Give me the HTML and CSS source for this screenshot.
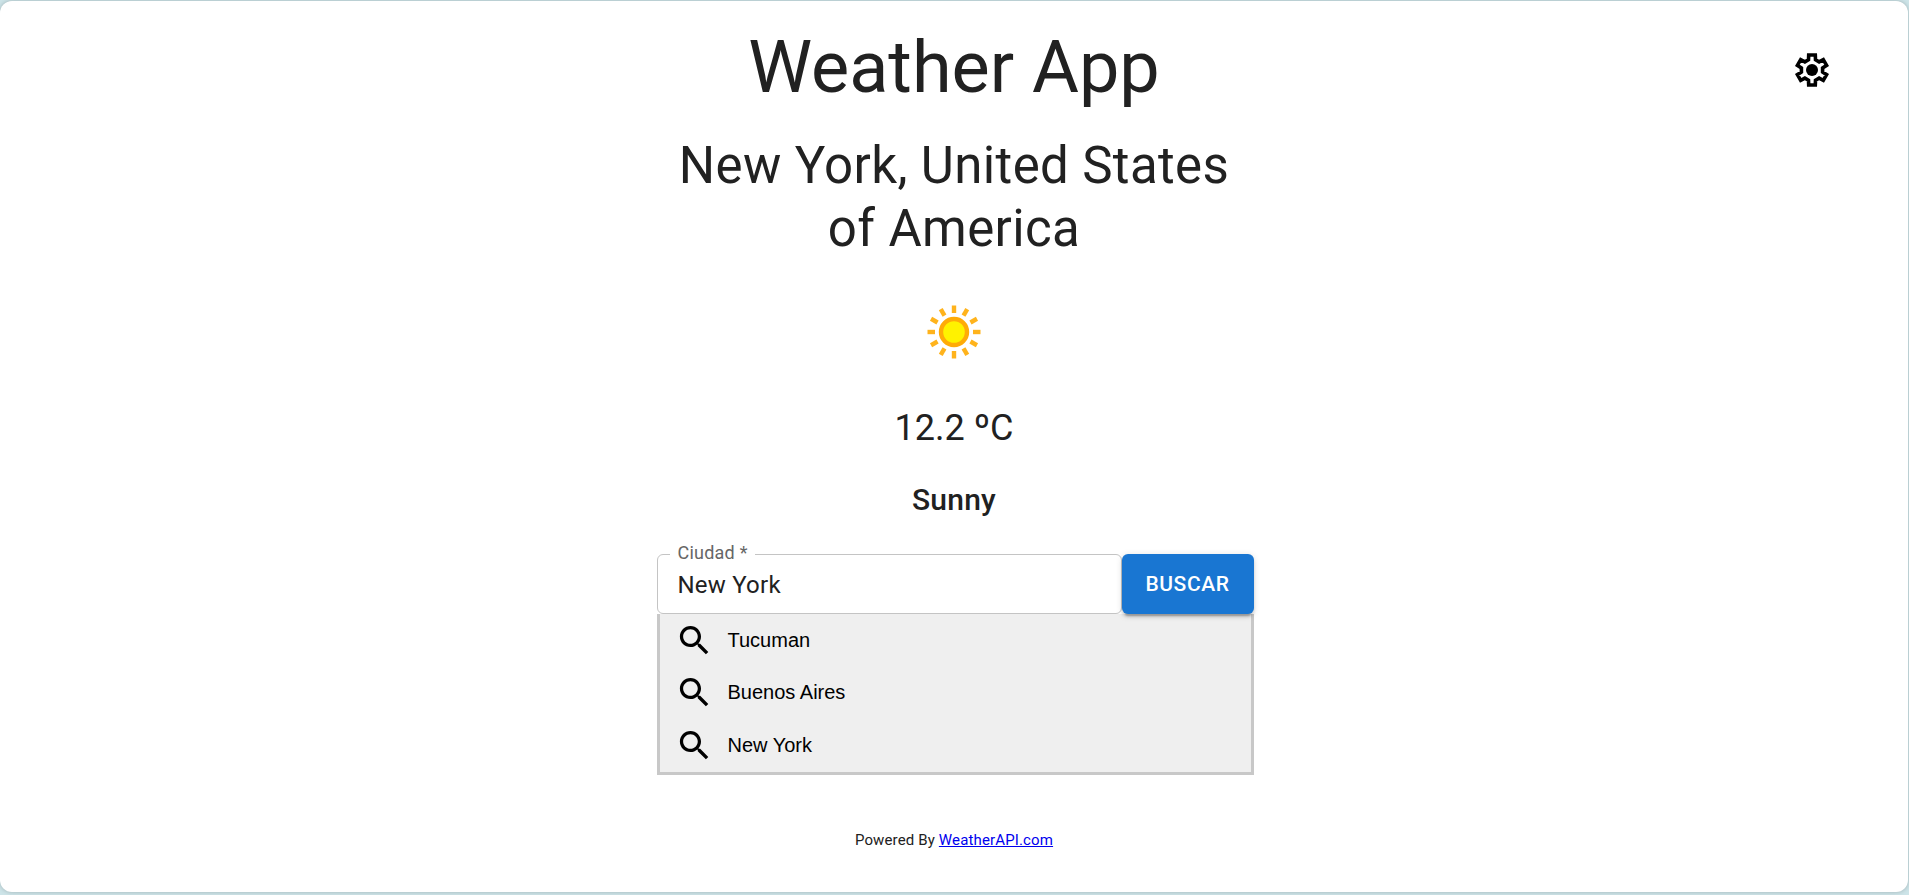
FILE: index.html
```html
<!DOCTYPE html>
<html lang="es">
<head>
<meta charset="utf-8">
<title>Weather App</title>
<link rel="stylesheet" href="styles.css">
</head>
<body>
<svg class="defs" width="0" height="0">
  <symbol id="search" viewBox="0 0 24 24"><path d="M15.5 14h-.79l-.28-.27C15.41 12.59 16 11.11 16 9.5 16 5.91 13.09 3 9.5 3S3 5.91 3 9.5 5.91 16 9.5 16c1.61 0 3.09-.59 4.23-1.57l.27.28v.79l5 4.99L20.49 19l-4.99-5zm-6 0C7.01 14 5 11.99 5 9.5S7.01 5 9.5 5 14 7.01 14 9.5 11.99 14 9.5 14z"/></symbol>
</svg>
<main class="card">
  <button class="settings" aria-label="Configuración">
    <svg viewBox="-18 -18 36 36" width="36" height="36">
      <path class="gear" d="M-3.3-15H3.3L3.5-10.2 7.1-8.1 11.3-10.4 14.6-4.6 10.6-2.1V2.1L14.6 4.6 11.3 10.4 7.1 8.1 3.5 10.2 3.3 15H-3.3L-3.5 10.2-7.1 8.1-11.3 10.4-14.6 4.6-10.6 2.1V-2.1L-14.6-4.6-11.3-10.4-7.1-8.1-3.5-10.2Z"/>
      <circle r="6"/>
    </svg>
  </button>
  <div class="content">
    <h1 class="title">Weather App</h1>
    <h2 class="place">New York, United States of America</h2>
    <svg class="sun" viewBox="-48 -48 96 96" width="96" height="96">
      <circle class="disc" r="13"/>
      <g class="rays">
        <path id="ray" d="M0-26.5V-19"/>
        <use href="#ray" transform="rotate(30)"/><use href="#ray" transform="rotate(60)"/>
        <use href="#ray" transform="rotate(90)"/><use href="#ray" transform="rotate(120)"/>
        <use href="#ray" transform="rotate(150)"/><use href="#ray" transform="rotate(180)"/>
        <use href="#ray" transform="rotate(210)"/><use href="#ray" transform="rotate(240)"/>
        <use href="#ray" transform="rotate(270)"/><use href="#ray" transform="rotate(300)"/>
        <use href="#ray" transform="rotate(330)"/>
      </g>
    </svg>
    <p class="temp">12.2 ºC</p>
    <p class="condition">Sunny</p>
    <div class="search-box">
      <div class="form">
        <div class="field"><span class="label">Ciudad *</span><span class="value">New York</span></div>
        <button class="submit">BUSCAR</button>
      </div>
      <div class="list">
        <div class="item"><svg class="icon"><use href="#search"/></svg>Tucuman</div>
        <div class="item"><svg class="icon"><use href="#search"/></svg>Buenos Aires</div>
        <div class="item"><svg class="icon"><use href="#search"/></svg>New York</div>
      </div>
    </div>
    <p class="footer">Powered By <a href="#">WeatherAPI.com</a></p>
  </div>
</main>
</body>
</html>
```
FILE: styles.css
```css
* { box-sizing: border-box; }
body {
  margin: 0;
  padding: 1px 1px 3px 0;
  height: 895px;
  overflow: hidden;
  background: #cde4e8;
  font-family: Roboto, sans-serif;
  color: #212121;
}
h1, h2, p { margin: 0; font-weight: 400; }
.defs { position: absolute; }
.card {
  position: relative;
  height: 891px;
  padding-top: 25px;
  border-radius: 12px;
  background: #fff;
  box-shadow: 0 0 4px rgba(0,0,0,.22);
}
.settings {
  position: absolute;
  top: 51px;
  right: 78.5px;
  display: flex;
  padding: 0;
  border: 0;
  background: none;
}
.gear { fill: none; stroke: #000; stroke-width: 3.6; }
.content {
  display: flex;
  flex-direction: column;
  align-items: center;
  width: 597px;
  margin: 0 auto;
  text-align: center;
}
.title { font-size: 72px; line-height: 84px; }
.place {
  margin-top: 24px;
  font-size: 51px;
  line-height: 63px;
  letter-spacing: .00735em;
}
.sun { margin-top: 24px; }
.disc { fill: #fff200; stroke: #ffab07; stroke-width: 4.4; }
.rays { stroke: #ffb31c; stroke-width: 4.4; }
.temp { margin-top: 24px; font-size: 36px; line-height: 48px; }
.condition {
  margin-top: 24px;
  font-size: 30px;
  font-weight: 500;
  line-height: 47px;
  letter-spacing: .0075em;
}
.search-box { width: 597px; margin: 31px -1px 0 1px; text-align: left; }
.form { display: flex; height: 60px; }
.field {
  position: relative;
  flex: 1;
  padding: 0 20px;
  border: 1px solid #c4c4c4;
  border-radius: 6px;
  font-size: 24px;
  line-height: 60px;
  letter-spacing: .00938em;
}
.label {
  position: absolute;
  top: -13px;
  left: 12px;
  padding: 0 7px 0 8px;
  background: #fff;
  color: #666;
  font-size: 18px;
  line-height: 21px;
}
.submit {
  position: relative;
  width: 132px;
  padding: 0;
  border: 0;
  border-radius: 6px;
  background: #1976d2;
  color: #fff;
  font: 500 21px Roboto, sans-serif;
  letter-spacing: .02857em;
  box-shadow: 0 4.5px 1.5px -3px rgba(0,0,0,.2), 0 3px 3px rgba(0,0,0,.14), 0 1.5px 7.5px rgba(0,0,0,.12);
}
.list {
  border: 3px solid #c8c8c8;
  border-top: 0;
  background: #efefef;
  color: #000;
  font: 20px "Liberation Sans", Arial, sans-serif;
}
.item {
  display: flex;
  align-items: center;
  gap: 14px;
  height: 52.6px;
  padding-left: 15px;
}
.icon { width: 39px; height: 39px; }
.footer { margin-top: 54px; font-size: 15px; line-height: 22px; letter-spacing: .00938em; }
.footer a { color: #0000ee; }
```
